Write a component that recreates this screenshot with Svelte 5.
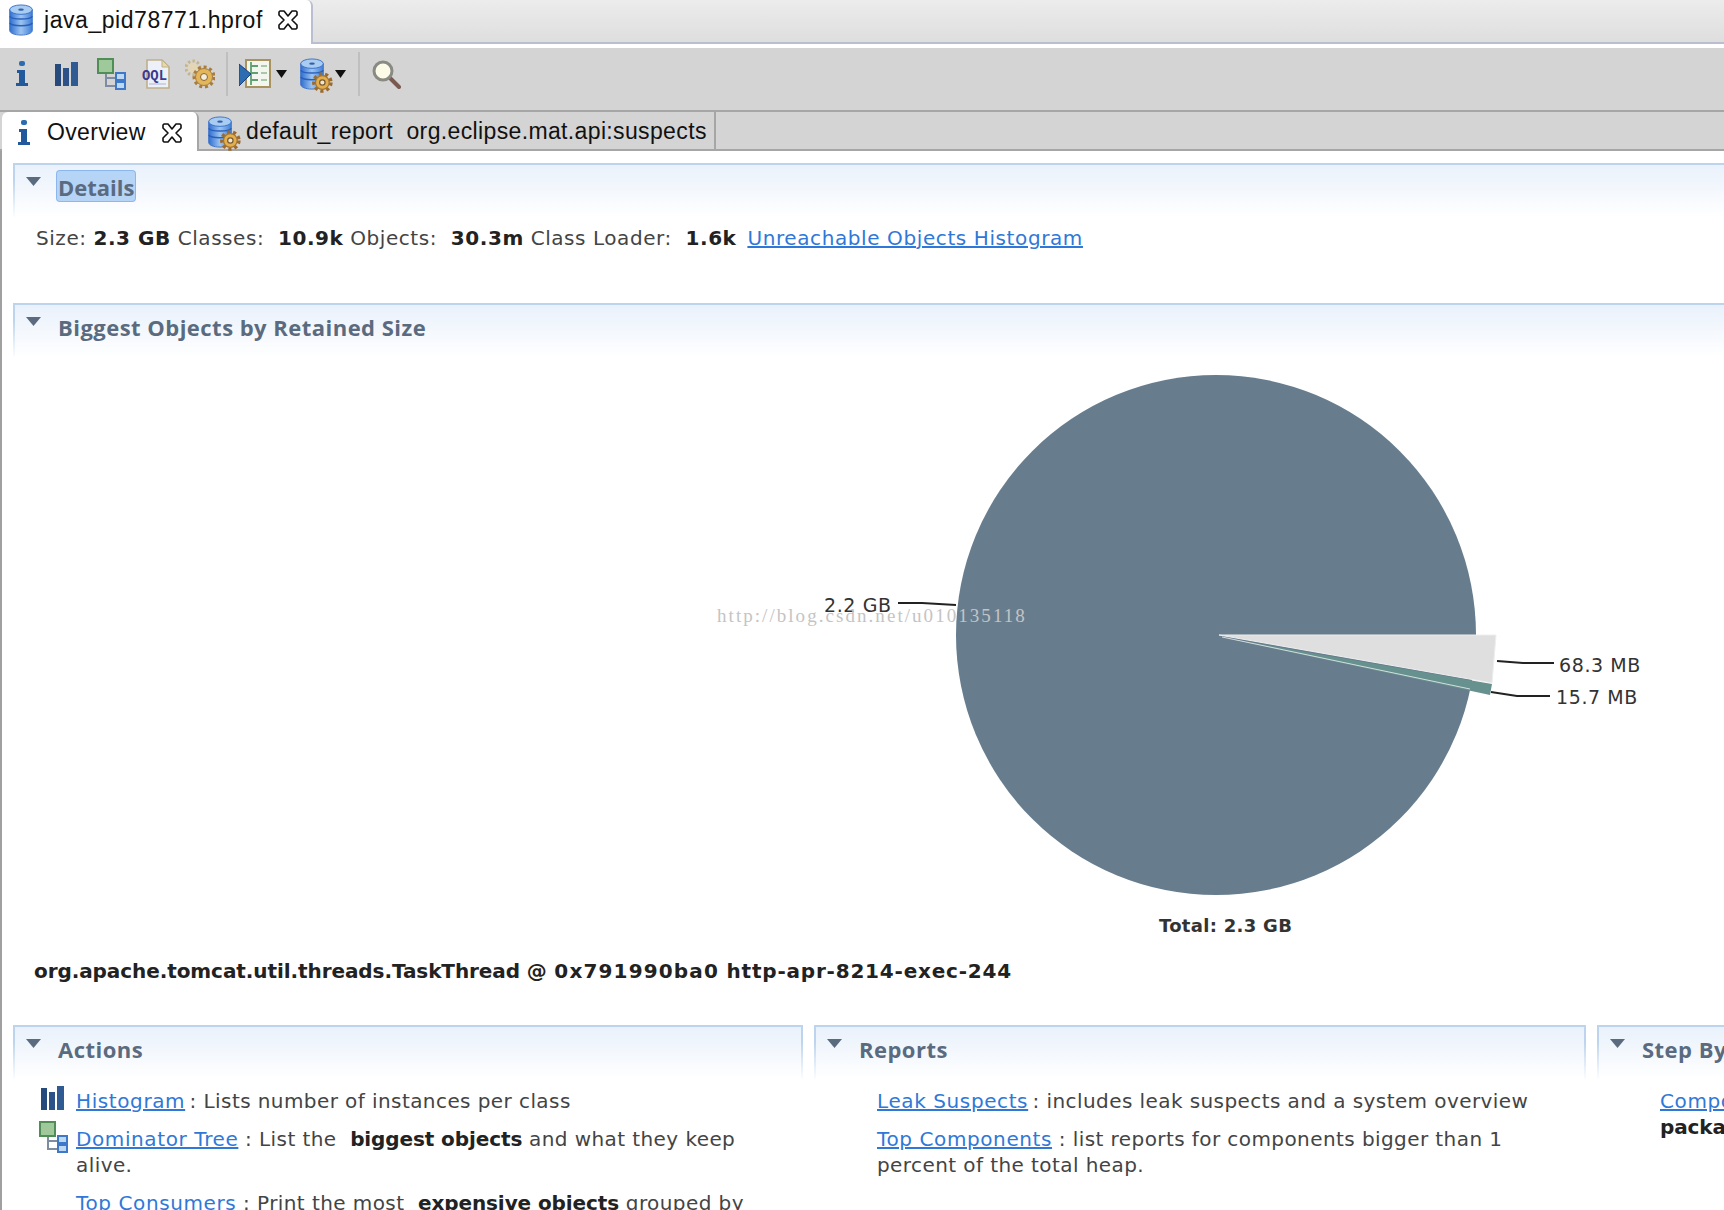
<script>
  const arrowPath = "M0 0h11L5.500 8z";
</script>

{#snippet db(gear)}
  <svg class="ic" width="26" height="32" viewBox="0 0 26 34" style="overflow:visible">
    <defs>
      <linearGradient id="dbg" x1="0" x2="1" y1="0" y2="0">
        <stop offset="0" stop-color="#2f6fd0" /><stop offset="0.5" stop-color="#9cc4f0" /><stop offset="1" stop-color="#3f7fd8" />
      </linearGradient>
    </defs>
    <path d="M1 6v22c0 3 5 5 12 5s12-2 12-5V6z" fill="url(#dbg)" stroke="#3a70c8" />
    <ellipse cx="13" cy="6" rx="12" ry="5" fill="#a9cdf2" stroke="#3a70c8" />
    <ellipse cx="13" cy="6" rx="3" ry="1.2" fill="#33609f" />
    <path d="M1 13c2 4 22 4 24 0M1 20c2 4 22 4 24 0" fill="none" stroke="#2a60bc" stroke-width="1.6" />
    {#if gear}
      <g transform="translate(24 26) scale(1.3)">
        <circle r="7" fill="none" stroke="#9a6a30" stroke-width="2.800" stroke-dasharray="2.6 2.4" />
        <circle r="5.6" fill="#e2ae4e" stroke="#a4742e" />
        <circle r="2.200" fill="#f0e6d0" stroke="#7a5a30" />
      </g>
    {/if}
  </svg>
{/snippet}

{#snippet info()}
  <svg class="ic" width="14" height="26" viewBox="0 0 14 26">
    <rect x="4" y="0" width="6" height="5" rx="2" fill="#2b6cb0" />
    <path d="M2 9h8v13h3v3H1v-3h3V12H2z" fill="#22589c" />
  </svg>
{/snippet}

{#snippet bars()}
  <svg class="ic" width="23" height="24" viewBox="0 0 23 24">
    <rect x="0" y="2" width="6" height="22" fill="#264a7c" />
    <rect x="8" y="6" width="6" height="18" fill="#2c5288" />
    <rect x="16" y="0" width="7" height="24" fill="#2f5a92" />
  </svg>
{/snippet}

{#snippet tree()}
  <svg class="ic" width="29" height="32" viewBox="0 0 29 32">
    <path d="M9 16v12h10M9 20h10" fill="none" stroke="#7d8ca0" stroke-width="2" />
    <rect x="1" y="1" width="15" height="14" fill="#9fc99a" stroke="#4f8f55" stroke-width="2" />
    <rect x="19" y="15" width="9" height="7" fill="#bcd8f2" stroke="#3f78c8" stroke-width="2" />
    <rect x="19" y="24" width="9" height="7" fill="#bcd8f2" stroke="#3f78c8" stroke-width="2" />
  </svg>
{/snippet}

{#snippet oql()}
  <svg class="ic" width="28" height="30" viewBox="0 0 28 30">
    <path d="M5 1h15l7 7v21H5z" fill="#eef0f8" stroke="#bfb08a" stroke-width="1.6" />
    <path d="M20 1v7h7z" fill="#e8d9a8" stroke="#bfb08a" />
    <text x="0" y="21" class="oql" textLength="25" lengthAdjust="spacingAndGlyphs">OQL</text>
    <path d="M7 25h17" stroke="#c4c8dc" stroke-width="1.5" />
  </svg>
{/snippet}

{#snippet gears()}
  <svg class="ic" width="30" height="30" viewBox="0 0 30 30">
    <g transform="translate(8 9)">
      <circle r="7" fill="none" stroke="#c8b48a" stroke-width="3" stroke-dasharray="2.4 2.2" />
      <circle r="5" fill="#e4d6b4" />
    </g>
    <g transform="translate(19 18)">
      <circle r="10" fill="none" stroke="#a87c3c" stroke-width="3" stroke-dasharray="3 2.800" />
      <circle r="8.500" fill="#e4b65a" stroke="#a87c3c" />
      <circle r="3.500" fill="#f2ecd8" stroke="#8a6430" />
    </g>
  </svg>
{/snippet}

{#snippet closeX()}
  <svg class="ic" width="20" height="20" viewBox="0 0 20 20">
    <path d="M2 1h4l4 5 4-5h4l1 1v3l-5 5 5 5v3l-1 1h-4l-4-5-4 5H2l-1-1v-3l5-5-5-5V2z" fill="#fff" stroke="#111" stroke-width="1.6" stroke-linejoin="round" />
  </svg>
{/snippet}

{#snippet twisty()}
  <svg class="twisty" width="15" height="9" viewBox="0 0 15 9"><path d="M0 0h15l-7.500 9z" fill="#5a6b80" /></svg>
{/snippet}

<div class="page">
  <div class="editor-tabs">
    <div class="editor-tab">
      {@render db(false)}
      <span>java_pid78771.hprof</span>
      {@render closeX()}
    </div>
  </div>

  <div class="toolbar">
    <span class="tool">{@render info()}</span>
    <span class="tool">{@render bars()}</span>
    <span class="tool">{@render tree()}</span>
    <span class="tool">{@render oql()}</span>
    <span class="tool">{@render gears()}</span>
    <i class="sep"></i>
    <span class="tool view">
      <svg class="ic" width="32" height="30" viewBox="0 0 32 30">
        <rect x="7" y="1" width="24" height="27" fill="#f2f6ee" stroke="#a8935e" stroke-width="2" />
        <path d="M12 3v23M12 7h7M12 14h7M12 21h7" stroke="#5fa070" stroke-width="1.8" fill="none" />
        <path d="M22 7h6M22 14h6M22 21h6" stroke="#a8c8a8" stroke-width="1.8" />
        <path d="M0 5l12 10L0 27z" fill="#2c6cb0" stroke="#1c3f80" />
      </svg>
    </span>
    <svg class="arrow" width="11" height="8" viewBox="0 0 11 8"><path d={arrowPath} fill="#111" /></svg>
    <span class="tool db">{@render db(true)}</span>
    <svg class="arrow" width="11" height="8" viewBox="0 0 11 8"><path d={arrowPath} fill="#111" /></svg>
    <i class="sep sep2"></i>
    <span class="tool lens">
      <svg class="ic" width="29" height="29" viewBox="0 0 29 29">
        <path d="M18 18l9 9" stroke="#7a5a50" stroke-width="4" stroke-linecap="round" />
        <circle cx="11" cy="11" r="9" fill="#fbfbe8" stroke="#8a8a84" stroke-width="3" />
      </svg>
    </span>
  </div>

  <div class="sub-tabs">
    <div class="sub-tab active">
      <span class="sub-ic">{@render info()}</span>
      <span>Overview</span>
      {@render closeX()}
    </div>
    <div class="sub-tab">
      {@render db(true)}
      <span class="report">default_report&nbsp; org.eclipse.mat.api:suspects</span>
    </div>
  </div>

  <div class="content">
    <section class="panel wide">
      <header>{@render twisty()}<h2 class="focus">Details</h2></header>
      <p class="facts">
        Size: <b>2.3 GB</b> Classes: &nbsp;<b>10.9k</b> Objects: &nbsp;<b>30.3m</b> Class Loader: &nbsp;<b>1.6k</b>
        <a href="#top">Unreachable Objects Histogram</a>
      </p>
    </section>

    <section class="panel wide">
      <header>{@render twisty()}<h2>Biggest Objects by Retained Size</h2></header>
      <div class="chart">
        <svg width="1711" height="570" viewBox="0 0 1711 570">
          <g transform="translate(-13 -326)">
            <circle cx="1216" cy="635" r="260" fill="#677d8e" />
            <path d="M1219 635L1496 635L1492 683z" fill="#dfdfdf" stroke="#eee" />
            <path d="M1225 638L1492 684L1490 695z" fill="#67918e" />
            <path d="M1222 637L1470 689" stroke="#fff" stroke-width="1" stroke-opacity="0.7" />
            <g fill="none" stroke="#222" stroke-width="1.8">
              <path d="M898 603h24l34 2" />
              <path d="M1497 661l26 2h31" />
              <path d="M1491 692l26 4h33" />
            </g>
            <g class="lab">
              <text x="824" y="612">2.2 GB</text>
              <text x="1559" y="672">68.3 MB</text>
              <text x="1556" y="704">15.7 MB</text>
            </g>
          </g>
        </svg>
        <span class="mark">http://blog.csdn.net/u010135118</span>
      </div>
      <p class="total">Total: 2.3 GB</p>
      <p class="object"><span class="o-name">org.apache.tomcat.util.threads.TaskThread @</span> <span class="o-addr">0x791990ba0</span> <span class="o-http">http-apr-8214-exec-244</span></p>
    </section>

    <div class="columns">
      <section class="panel">
        <header>{@render twisty()}<h2>Actions</h2></header>
        <ul>
          <li><span class="li-ic">{@render bars()}</span><a href="#top">Histogram</a>&thinsp;: Lists number of instances per class</li>
          <li><span class="li-ic tree">{@render tree()}</span><a href="#top">Dominator Tree</a> : List the &nbsp;<b>biggest objects</b> and what they keep alive.</li>
          <li><a href="#top">Top Consumers</a> : Print the most &nbsp;<b>expensive objects</b> grouped by class and by package.</li>
        </ul>
      </section>
      <section class="panel">
        <header>{@render twisty()}<h2>Reports</h2></header>
        <ul>
          <li><a href="#top">Leak Suspects</a>&thinsp;: includes leak suspects and a system overview</li>
          <li><a href="#top">Top Components</a> : list reports for components bigger than 1 percent of the total heap.</li>
        </ul>
      </section>
      <section class="panel">
        <header>{@render twisty()}<h2>Step By Step</h2></header>
        <ul class="steps">
          <li><a href="#top">Component Report</a>: Analyze objects which belong to a common root <b>package</b> or class loader.</li>
        </ul>
      </section>
    </div>
  </div>
</div>

<style>
  :global(body) {
    margin: 0;
    background: #fff;
  }

  * {
    box-sizing: border-box;
  }

  .page {
    width: 1724px;
    height: 1210px;
    overflow: hidden;
    display: flex;
    flex-direction: column;
    font-family: "DejaVu Sans", sans-serif;
    color: #333;
  }

  .ic {
    display: block;
    flex: none;
  }

  .oql {
    font: 700 15px "Liberation Mono", monospace;
    fill: #3c3a90;
  }

  .editor-tabs {
    height: 44px;
    flex: none;
    background: linear-gradient(#ececec, #dedede);
    border-bottom: 2px solid #b9bfd0;
  }

  .editor-tab {
    width: 313px;
    height: 44px;
    display: flex;
    align-items: center;
    padding: 0 0 4px 8px;
    background: #fff;
    border-right: 2px solid #b9bfd0;
    border-top-right-radius: 6px;
    font: 23px "Liberation Sans", sans-serif;
    letter-spacing: 0.55px;
    color: #111;
  }

  .editor-tab span {
    margin: 0 15px 0 10px;
  }

  .toolbar {
    height: 62px;
    flex: none;
    margin-top: 4px;
    padding-bottom: 10px;
    background: #d4d4d4;
    display: flex;
    align-items: center;
  }

  .tool {
    width: 44px;
    height: 34px;
    display: flex;
    align-items: center;
    justify-content: center;
    flex: none;
  }

  .tool:nth-child(3) {
    margin-left: 1px;
  }

  .tool:nth-child(4) {
    margin-left: 1px;
  }

  .sep {
    width: 2px;
    height: 44px;
    background: #bfbfbf;
    margin-left: 4px;
    flex: none;
  }

  .tool.view {
    margin-left: 8px;
    width: 38px;
    margin-right: 2px;
  }

  .tool.db {
    margin-left: 2px;
    width: 46px;
  }

  .arrow {
    flex: none;
    margin-left: 0;
  }

  .sep2 {
    margin-left: 12px;
  }

  .tool.lens {
    margin-left: 4px;
  }

  .sub-tabs {
    height: 41px;
    flex: none;
    display: flex;
    background: #d4d4d4;
    border-top: 2px solid #a6a6a6;
    border-bottom: 2px solid #a6a6a6;
    font: 23px "Liberation Sans", sans-serif;
    letter-spacing: 0.36px;
    color: #111;
  }

  .sub-tab {
    height: 37px;
    display: flex;
    align-items: center;
    padding: 2px 7px 0 8px;
    border-right: 2px solid #a6a6a6;
  }

  .sub-tab.active {
    width: 197px;
    height: 39px;
    margin-left: 2px;
    padding-left: 15px;
    background: #fff;
    border-top-left-radius: 6px;
    border-top-right-radius: 6px;
  }

  .sub-ic {
    margin-right: 16px;
  }

  .sub-tab.active span + span {
    margin-right: 16px;
  }

  .report {
    margin-left: 13px;
    white-space: nowrap;
  }

  .content {
    flex: 1;
    min-height: 0;
    padding: 12px 0 0 11px;
    border-left: 2px solid #a0a0a0;
    display: flex;
    flex-direction: column;
    font-size: 20px;
    letter-spacing: 0.55px;
  }

  .panel {
    flex: none;
  }

  .panel.wide {
    margin-right: -20px;
  }

  .panel > header {
    height: 54px;
    display: flex;
    padding-left: 11px;
    border: 2px solid #bcd4ee;
    border-bottom: 0;
    border-image: linear-gradient(#bcd4ee 30%, #fff) 2;
    background: linear-gradient(#e9f1fb, #fff);
  }

  .twisty {
    margin: 12px 13px 0 0;
    flex: none;
  }

  h2 {
    margin: 8px 0 0 4px;
    height: 30px;
    font-size: 22px;
    line-height: 29px;
    font-weight: 700;
    font-family: "Open Sans", sans-serif;
    color: #5a6b80;
    letter-spacing: 0.47px;
  }

  .focus {
    margin: 6px 0 0 3px;
    padding: 0 1px;
    line-height: 33px;
    letter-spacing: 0;
    background: #b6d4f6;
    box-shadow: 0 0 0 1px #8cb7ee;
    border-radius: 3px;
  }

  .facts {
    margin: 0;
    padding: 9px 0 0 23px;
    height: 86px;
    line-height: 24px;
    white-space: nowrap;
    color: #444;
  }

  .facts a {
    margin-left: 4px;
  }

  b {
    color: #222;
  }

  li b {
    letter-spacing: -0.1px;
  }

  a {
    color: #2f78d8;
    text-decoration: underline;
    letter-spacing: 0.6px;
  }

  .chart {
    position: relative;
    height: 570px;
    margin-top: -31px;
    pointer-events: none;
  }

  .chart svg {
    display: block;
  }

  .lab {
    font: 19px "DejaVu Sans", sans-serif;
    letter-spacing: 0.6px;
    fill: #333;
  }

  .mark {
    position: absolute;
    left: 704px;
    top: 279px;
    font: 19px "Liberation Serif", serif;
    letter-spacing: 2.050px;
    color: #c4c4c4;
    white-space: nowrap;
  }

  .total {
    margin: 19px 0 0 1146px;
    font: 700 18px "DejaVu Sans", sans-serif;
    letter-spacing: 0.3px;
    color: #333;
    white-space: nowrap;
    height: 24px;
  }

  .object {
    margin: 20px 0 0 21px;
    font-weight: 700;
    white-space: nowrap;
    color: #222;
    height: 24px;
  }

  .o-name {
    letter-spacing: -0.08px;
  }

  .o-addr {
    letter-spacing: 1.150px;
  }

  .o-http {
    letter-spacing: 0.8px;
  }

  .columns {
    margin-top: 42px;
    display: grid;
    grid-template-columns: 790px 772px 200px;
    column-gap: 11px;
  }

  ul {
    list-style: none;
    margin: 9px 0 0;
    padding: 0 50px 0 63px;
    line-height: 26px;
    color: #444;
    letter-spacing: 0.42px;
  }

  .steps {
    width: 880px;
  }

  li {
    position: relative;
    margin-bottom: 12px;
  }

  .li-ic {
    position: absolute;
    left: -35px;
    top: -2px;
  }

  .li-ic.tree {
    left: -37px;
    top: -5px;
  }
</style>
